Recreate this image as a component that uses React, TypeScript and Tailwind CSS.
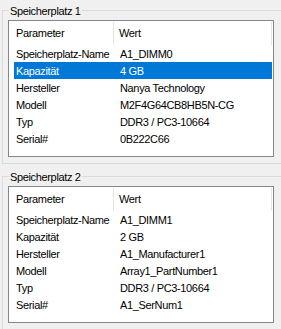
const SLOTS = [
  {
    title: "Speicherplatz 1",
    selected: 1,
    rows: [
      ["Speicherplatz-Name", "A1_DIMM0"],
      ["Kapazität", "4 GB"],
      ["Hersteller", "Nanya Technology"],
      ["Modell", "M2F4G64CB8HB5N-CG"],
      ["Typ", "DDR3 / PC3-10664"],
      ["Serial#", "0B222C66"],
    ],
  },
  {
    title: "Speicherplatz 2",
    selected: -1,
    rows: [
      ["Speicherplatz-Name", "A1_DIMM1"],
      ["Kapazität", "2 GB"],
      ["Hersteller", "A1_Manufacturer1"],
      ["Modell", "Array1_PartNumber1"],
      ["Typ", "DDR3 / PC3-10664"],
      ["Serial#", "A1_SerNum1"],
    ],
  },
];

function SlotGroup({ title, rows, selected, first }: { title: string; rows: string[][]; selected: number; first: boolean }) {
  return (
    <div
      className={
        first
          ? "relative ml-[2px] mt-[10px] h-[154px] w-[300px] border border-[#dcdcdc] pl-[5px] pt-[9px]"
          : "relative ml-[2px] mt-[12px] h-[154px] w-[300px] border border-[#dcdcdc] pl-[5px] pt-[9px]"
      }
    >
      <span className="absolute left-[6px] top-[-7px] bg-[#f0f0f0] px-[1px] leading-[14px]">{title}</span>
      <div className="h-[137px] w-[266px] border border-[#828790] bg-white">
        <div className="flex h-[24px] items-center pt-px">
          <span className="w-[104px] shrink-0 pl-[7px]">Parameter</span>
          <span className="h-full w-px shrink-0 bg-[#e5e5e5]" />
          <span className="flex-1 pl-[5px]">Wert</span>
          <span className="mr-[1px] h-[23px] w-px shrink-0 self-start bg-[#e5e5e5]" />
        </div>
        {rows.map(([k, v], i) => (
          <div
            key={k}
            className={
              i === selected
                ? "ml-[5px] mr-px flex h-[17px] items-center bg-[#0078d7] pt-px text-white"
                : "ml-[5px] mr-px flex h-[17px] items-center pt-px"
            }
          >
            <span className="w-[105px] shrink-0 pl-[2px]">{k}</span>
            <span className="pl-[1px]">{v}</span>
          </div>
        ))}
      </div>
    </div>
  );
}

export default function App() {
  return (
    <div className="h-[329px] w-[281px] overflow-hidden bg-[#f0f0f0] font-['Liberation_Sans',Arial,sans-serif] text-[11px] tracking-[-0.35px] text-black">
      {SLOTS.map((s, i) => (
        <SlotGroup key={s.title} title={s.title} rows={s.rows} selected={s.selected} first={i === 0} />
      ))}
    </div>
  );
}
